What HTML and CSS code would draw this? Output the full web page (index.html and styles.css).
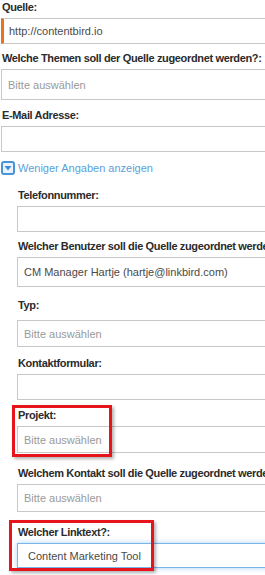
FILE: index.html
```html
<!DOCTYPE html>
<html lang="de">
<head>
<meta charset="utf-8">
<link rel="stylesheet" href="styles.css">
</head>
<body>
<div class="form">
  <div class="field f-quelle">
    <label class="lbl">Quelle:</label>
    <div class="inp inp-accent"><span class="val">http://contentbird.io</span></div>
  </div>
  <div class="field f-themen">
    <label class="lbl">Welche Themen soll der Quelle zugeordnet werden?:</label>
    <div class="inp sel"><span class="ph">Bitte auswählen</span></div>
  </div>
  <div class="field f-mail">
    <label class="lbl">E-Mail Adresse:</label>
    <div class="inp"></div>
  </div>
  <div class="toggle">
    <svg class="tg-icon" width="14" height="14" viewBox="0 0 14 14">
      <rect x="1" y="1" width="12" height="12" rx="2" fill="#eaf3fc" stroke="#4b93d8" stroke-width="2"/>
      <path d="M3.5 5 L10.5 5 L7 9.5 Z" fill="#3f8ad6"/>
    </svg>
    <span class="tg-text">Weniger Angaben anzeigen</span>
  </div>
  <div class="more">
    <div class="field f-tel">
      <label class="lbl">Telefonnummer:</label>
      <div class="inp"></div>
    </div>
    <div class="field f-user">
      <label class="lbl">Welcher Benutzer soll die Quelle zugeordnet werden?:</label>
      <div class="inp sel"><span class="val">CM Manager Hartje (hartje@linkbird.com)</span></div>
    </div>
    <div class="field f-typ">
      <label class="lbl">Typ:</label>
      <div class="inp sel"><span class="ph">Bitte auswählen</span></div>
    </div>
    <div class="field f-kf">
      <label class="lbl">Kontaktformular:</label>
      <div class="inp"></div>
    </div>
    <div class="field f-projekt">
      <label class="lbl">Projekt:</label>
      <div class="inp sel"><span class="ph">Bitte auswählen</span></div>
      <div class="mark mark-projekt"></div>
    </div>
    <div class="field f-kontakt">
      <label class="lbl">Welchem Kontakt soll die Quelle zugeordnet werden?:</label>
      <div class="inp sel"><span class="ph">Bitte auswählen</span></div>
    </div>
    <div class="field f-link">
      <label class="lbl">Welcher Linktext?:</label>
      <div class="inp inp-focus"><span class="val">Content Marketing Tool</span></div>
      <div class="mark mark-link"></div>
    </div>
  </div>
</div>
</body>
</html>
```

FILE: styles.css
```css
html, body {
  margin: 0;
  padding: 0;
  background: #ffffff;
  overflow: hidden;
}
body {
  width: 265px;
  height: 575px;
  font-family: "Liberation Sans", Arial, sans-serif;
  font-size: 11px;
  color: #333;
}
.form {
  padding: 1px 0 0 1px;
  width: 320px;
}
.field {
  position: relative;
  margin-top: 9px;
}
.lbl {
  display: block;
  font-weight: bold;
  letter-spacing: -0.35px;
  line-height: 13px;
  height: 13px;
  margin: 0 0 4px 1px;
  white-space: nowrap;
  color: #2b2b2b;
}
.inp {
  box-sizing: border-box;
  height: 26px;
  border: 1px solid #c8c8c8;
  background: #fff;
  display: flex;
  align-items: center;
  padding-left: 6px;
  white-space: nowrap;
}
.inp.sel {
  height: 28px;
}

/* per-field vertical rhythm */
.f-quelle { margin-top: 0; }
.f-themen { margin-top: 8px; }
.f-themen .inp { height: 31px; }
.f-mail { margin-top: 9px; }
.f-tel { margin-top: 0; }
.f-user { margin-top: 8px; }
.f-user .inp { height: 30px; }
.f-typ { margin-top: 12px; }
.f-typ .lbl { margin-bottom: 8px; }
.f-typ .inp { height: 27px; }
.f-kf { margin-top: 10px; }
.f-projekt { margin-top: 9px; }
.f-projekt .inp { height: 27px; }
.f-kontakt { margin-top: 14px; }
.f-link { margin-top: 14px; }
.f-link .inp { height: 25px; }

.inp-accent {
  border-left: 3px solid #e8731e;
  padding-left: 5px;
}
.inp-focus {
  border-color: #78b6ec;
  box-shadow: 0 0 5px rgba(102, 175, 233, 0.55);
  padding-left: 10px;
}
.val {
  color: #4a4a4a;
}
.ph {
  color: #9a9a9a;
}
.toggle {
  display: flex;
  align-items: center;
  gap: 3px;
  height: 16px;
  margin: 8px 0 13px 0;
}
.tg-icon {
  display: block;
}
.tg-text {
  color: #5b9fdc;
  font-size: 11px;
}
.more {
  padding-left: 16px;
}
.mark {
  position: absolute;
  border: 3px solid #e8141c;
  box-shadow: 2px 2px 3px rgba(0, 0, 0, 0.3);
  pointer-events: none;
}
.mark-projekt {
  left: -5px;
  top: -4px;
  width: 94px;
  height: 46px;
}
.mark-link {
  left: -8px;
  top: -6px;
  width: 139px;
  height: 45px;
}
```
